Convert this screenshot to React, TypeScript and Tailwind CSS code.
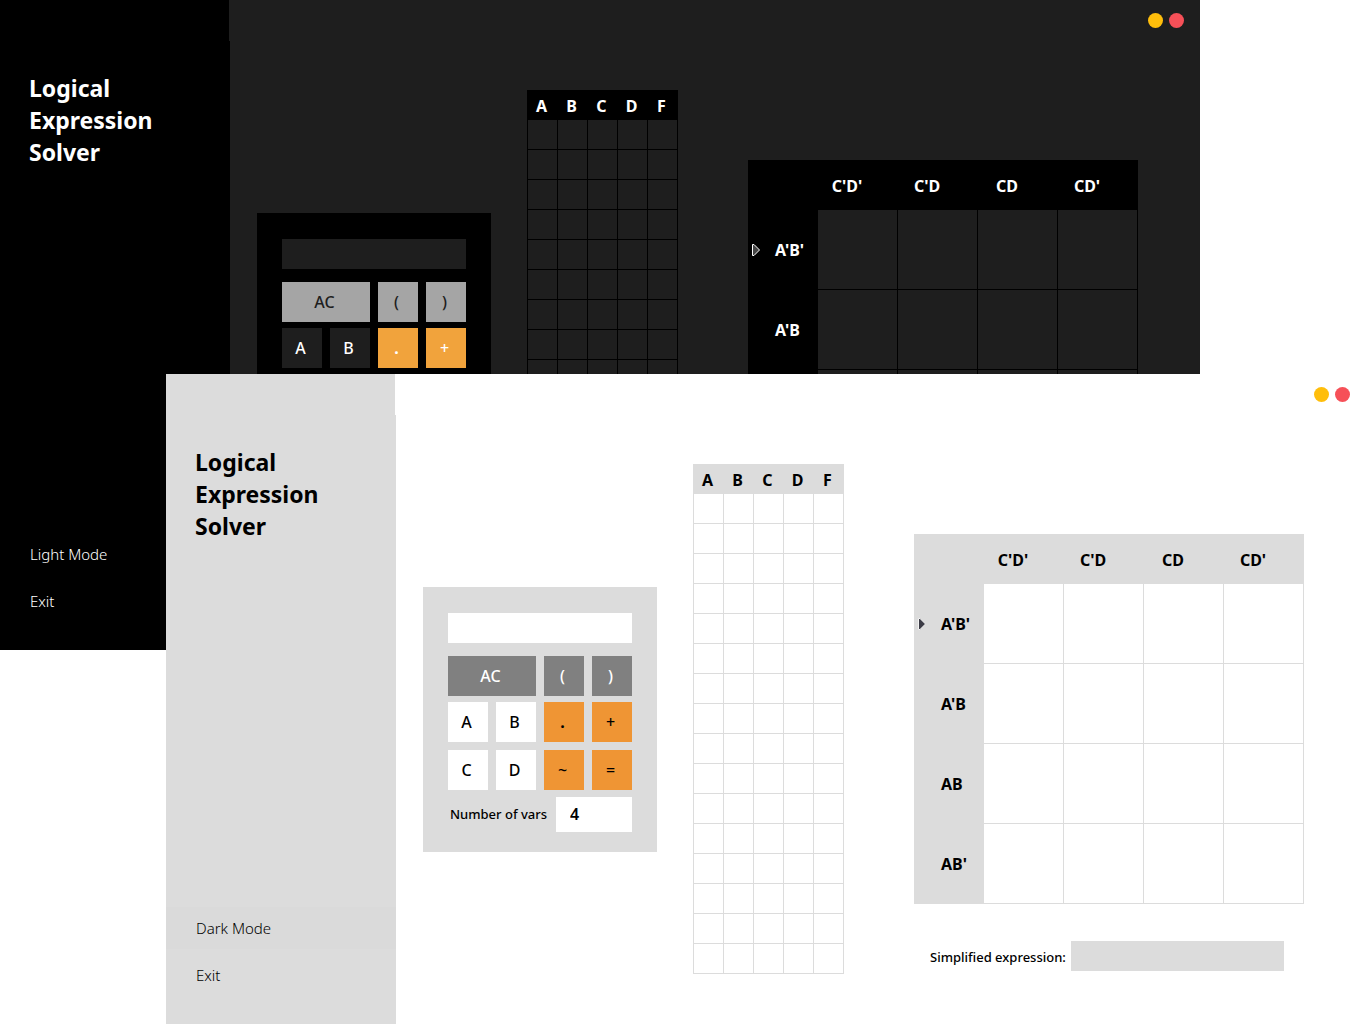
type Theme = {
  surface: string
  panel: string
  text: string
  line: string
  field: string
  utility: string
  letter: string
  operator: string
  active: string
  arrowFill: string
  arrowStroke: string
}

const dark: Theme = {
  surface: 'bg-[#1e1e1e]',
  panel: 'bg-black',
  text: 'text-white',
  line: 'border-black',
  field: 'bg-[#1e1e1e] text-white',
  utility: 'bg-[#a5a5a5] text-[#1e1e1e]',
  letter: 'bg-[#1e1e1e] text-white',
  operator: 'bg-[#f1a33c] text-white',
  active: 'bg-black',
  arrowFill: '#444444',
  arrowStroke: '#ffffff',
}

const light: Theme = {
  surface: 'bg-white',
  panel: 'bg-[#dcdcdc]',
  text: 'text-black',
  line: 'border-[#dcdcdc]',
  field: 'bg-white text-black',
  utility: 'bg-[#808080] text-white',
  letter: 'bg-white text-black',
  operator: 'bg-[#ef9534] text-black',
  active: 'bg-[#dadada]',
  arrowFill: '#3c3c46',
  arrowStroke: '#f4f4f4',
}

function Calculator({ theme, id }: { theme: Theme; id: string }) {
  const key = 'flex h-10 items-center justify-center pr-[3px] text-base leading-5'
  return (
    <section className={`w-[234px] shrink-0 px-[25px] pt-[26px] pb-5 ${theme.panel}`}>
      <input aria-label="Expression" className={`block h-[30px] w-full px-2 outline-none ${theme.field}`} />
      <div className="mt-[13px] grid grid-cols-4 gap-x-2">
        <button className={`col-span-2 font-medium ${key} ${theme.utility}`}>AC</button>
        <button className={`font-medium ${key} ${theme.utility}`}>(</button>
        <button className={`font-medium ${key} ${theme.utility}`}>)</button>
      </div>
      <div className="mt-1.5 grid grid-cols-4 gap-2">
        <button className={`font-medium ${key} ${theme.letter}`}>A</button>
        <button className={`font-medium ${key} ${theme.letter}`}>B</button>
        <button className={`font-bold ${key} ${theme.operator}`}>.</button>
        <button className={`font-medium ${key} ${theme.operator}`}>+</button>
        <button className={`font-medium ${key} ${theme.letter}`}>C</button>
        <button className={`font-medium ${key} ${theme.letter}`}>D</button>
        <button className={`font-medium ${key} ${theme.operator}`}>~</button>
        <button className={`font-medium ${key} ${theme.operator}`}>=</button>
      </div>
      <div className="mt-[7px] flex items-center justify-between pl-0.5">
        <label htmlFor={id} className={`text-[13px] font-medium whitespace-nowrap ${theme.text}`}>
          Number of vars
        </label>
        <input
          id={id}
          defaultValue="4"
          className={`h-[35px] w-[76px] px-3.5 pb-0.5 text-base font-semibold outline-none ${theme.field}`}
        />
      </div>
    </section>
  )
}

function TruthTable({ theme }: { theme: Theme }) {
  const columns = ['A', 'B', 'C', 'D', 'F']
  return (
    <table className={`w-[151px] shrink-0 table-fixed border-separate border-spacing-0 border-l ${theme.line} ${theme.text}`}>
      <thead>
        <tr className={theme.panel}>
          {columns.map((name) => (
            <th key={name} scope="col" className="h-[30px] p-0 pt-0.5 pr-[3px] text-base leading-5 font-bold">
              {name}
            </th>
          ))}
        </tr>
      </thead>
      <tbody>
        {Array.from({ length: 16 }, (_, row) => (
          <tr key={row}>
            {columns.map((name) => (
              <td key={name} className={`h-[30px] border-r border-b p-0 ${theme.line}`} />
            ))}
          </tr>
        ))}
      </tbody>
    </table>
  )
}

function KarnaughMap({ theme }: { theme: Theme }) {
  const columns = ["C'D'", "C'D", 'CD', "CD'"]
  const rows = ["A'B'", "A'B", 'AB', "AB'"]
  return (
    <table className={`w-full table-fixed border-separate border-spacing-0 text-base leading-5 ${theme.text}`}>
      <thead>
        <tr className={theme.panel}>
          <td className="h-[50px] w-[70px] p-0" />
          {columns.map((name) => (
            <th key={name} scope="col" className="p-0 pt-0.5 pr-[22px] font-bold">
              {name}
            </th>
          ))}
        </tr>
      </thead>
      <tbody>
        {rows.map((name, row) => (
          <tr key={name}>
            <th scope="row" className={`h-20 p-0 font-bold ${theme.panel}`}>
              <div className="flex items-center pl-1">
                <span className="w-[23px]">
                  {row === 0 && (
                    <svg width="9" height="12" viewBox="0 0 9 12" className="block" aria-hidden="true">
                      <path d="M.5.5H2L7.5 6 2 11.5H.5Z" fill={theme.arrowFill} stroke={theme.arrowStroke} />
                    </svg>
                  )}
                </span>
                {name}
              </div>
            </th>
            {columns.map((column) => (
              <td key={column} className={`border-r border-b p-0 ${theme.line}`} />
            ))}
          </tr>
        ))}
      </tbody>
    </table>
  )
}

function SolverWindow({ theme, mode, id }: { theme: Theme; mode: string; id: string }) {
  const item = `h-[42px] w-full pl-[30px] text-left text-[15px] font-[350] leading-5 ${theme.text}`
  return (
    <div className={`flex h-full flex-col overflow-hidden ${theme.surface}`}>
      <header className="flex h-[41px] shrink-0">
        <div className={`w-[229px] ${theme.panel}`} />
        <div className="flex flex-1 items-center justify-end gap-1.5 pr-4">
          <button aria-label="Minimize" className="size-[15px] rounded-full bg-[#ffbe0b]" />
          <button aria-label="Close" className="size-[15px] rounded-full bg-[#f65058]" />
        </div>
      </header>
      <div className="flex min-h-0 flex-1">
        <aside className={`flex w-[230px] shrink-0 flex-col justify-between pt-[31px] pb-7 ${theme.panel}`}>
          <h1 className={`pl-[29px] text-[23px] leading-8 font-bold ${theme.text}`}>
            Logical
            <br />
            Expression
            <br />
            Solver
          </h1>
          <nav className="flex flex-col gap-[5px]">
            <button className={`${item} ${theme.active}`}>{mode}</button>
            <button className={item}>Exit</button>
          </nav>
        </aside>
        <main className="flex min-w-0 flex-1 items-start pr-[62px] pl-[27px]">
          <div className="pt-[172px]">
            <Calculator theme={theme} id={`${id}-vars`} />
          </div>
          <div className="pt-[49px] pl-9">
            <TruthTable theme={theme} />
          </div>
          <div className="min-w-0 flex-1 pt-[119px] pl-[70px]">
            <KarnaughMap theme={theme} />
            <div className="mt-[37px] flex items-center pr-5 pl-4">
              <label
                htmlFor={`${id}-result`}
                className={`w-[141px] shrink-0 pt-1 text-[13px] font-medium whitespace-nowrap ${theme.text}`}
              >
                Simplified expression:
              </label>
              <input
                id={`${id}-result`}
                readOnly
                className={`h-[30px] min-w-0 flex-1 px-2 outline-none ${theme.panel} ${theme.text}`}
              />
            </div>
          </div>
        </main>
      </div>
    </div>
  )
}

export default function App() {
  return (
    <div className="relative h-screen overflow-hidden bg-white font-['Noto_Sans',sans-serif]">
      <div className="absolute top-0 right-[166px] bottom-[374px] left-0">
        <SolverWindow theme={dark} mode="Light Mode" id="dark" />
      </div>
      <div className="absolute top-[374px] right-0 bottom-0 left-[166px]">
        <SolverWindow theme={light} mode="Dark Mode" id="light" />
      </div>
    </div>
  )
}
